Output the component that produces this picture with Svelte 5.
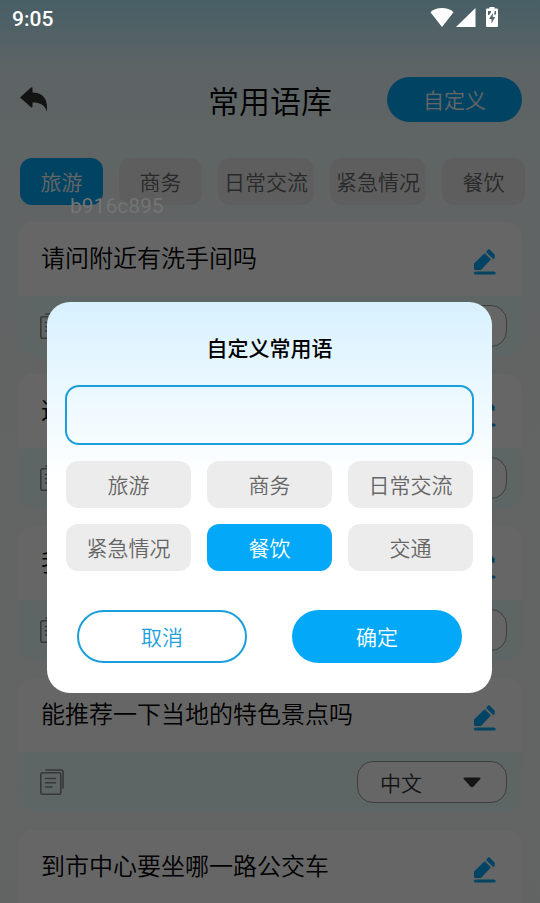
<script>
  const tabs = ['旅游', '商务', '日常交流', '紧急情况', '餐饮'];
  const categories = ['旅游', '商务', '日常交流', '紧急情况', '餐饮', '交通'];
  const phrases = [
    '请问附近有洗手间吗',
    '这个多少钱',
    '我想去这个地方',
    '能推荐一下当地的特色景点吗',
    '到市中心要坐哪一路公交车'
  ];
  let activeTab = $state('旅游');
  let category = $state('餐饮');
  let phrase = $state('');
</script>

<div class="screen">
  <div class="status">
    <span>9:05</span>
    <div class="signals">
      <svg width="24" height="20" viewBox="0 0 24 20" fill="#fff"><path d="M12 20 .5 5.200C3.500 2.400 7.500 1 12 1s8.500 1.400 11.500 4.200z" /></svg>
      <svg width="20" height="20" viewBox="0 0 20 20" fill="#fff"><path d="M19.500 1v19H0z" /></svg>
      <svg class="battery" width="12" height="20" viewBox="0 0 12 20"><path fill="#fff" d="M3.500 0h5v1.500H11q1 0 1 1V19q0 1-1 1H1q-1 0-1-1V2.500q0-1 1-1h2.500z" /><path fill="#56656b" d="M6.800 6 3 12h2.500v4.500L9.200 10H6.800zM2 4h3v1.200L3.200 8H2zM8.800 4H10v3.500H8z" /></svg>
    </div>
  </div>

  <header>
    <button class="back" aria-label="返回">
      <svg width="28" height="25" viewBox="0 0 28 25" fill="#303030"><path d="M0 10.500 11 .500q1.500-1 1.500.700v4.300C22 5.500 27 11 27 20v4.500C24.500 18 20.500 15.500 12.500 15.500v4q0 1.500-1.500.700z" /></svg>
    </button>
    <h1>常用语库</h1>
    <button class="custom">自定义</button>
  </header>

  <nav class="tabs">
    {#each tabs as tab}
      <button class:active={tab === activeTab} onclick={() => (activeTab = tab)}>{tab}</button>
    {/each}
  </nav>

  <main>
    {#each phrases as text, i}
      <article>
        <div class="top">
          <p>{text}</p>
          <button class="edit" aria-label="编辑">
            <svg width="22" height="26" viewBox="0 0 22 26" fill="#03a9f8"><path d="M0 14.500 10 4.700q.700-.600 1.300 0l5 5q.600.700 0 1.300L7 21H1Q0 21 0 20zM12 3 14.200.600q.700-.600 1.400 0l5 5q.600.700 0 1.400v2q-.500 1.500-1.900.500zM1.500 22.500h18.600a1.500 1.500 0 0 1 0 3H1.500a1.500 1.500 0 0 1 0-3z" /></svg>
          </button>
        </div>
        <div class="bottom">
          <button class="copy" aria-label="复制">
            <svg width="24" height="26" viewBox="0 0 24 26" fill="none" stroke="#8a8a8a" stroke-width="1.600" stroke-linecap="round"><rect x=".8" y="3.800" width="20" height="21.400" rx="2" /><path d="M6 1h15q2 0 2 2v16M5.500 9.500h10M5.500 13.800h10M5.500 18h6.500" /></svg>
          </button>
          <div class="language">
            <select aria-label="语言 {i + 1}"><option>中文</option></select>
            <svg width="18" height="11" viewBox="0 0 18 11" fill="#333"><path d="M2 .500h14q2.500 0 1 1.800L10.500 9.500Q9 11 7.500 9.500L1 2.300Q-.500.500 2 .500z" /></svg>
          </div>
        </div>
      </article>
    {/each}
  </main>
  <span class="device">b916c895</span>

  <div class="overlay">
    <div class="dialog" role="dialog" aria-modal="true" aria-labelledby="dialog-title">
      <h2 id="dialog-title">自定义常用语</h2>
      <input type="text" aria-labelledby="dialog-title" bind:value={phrase} />
      <div class="categories">
        {#each categories as name}
          <button class:active={name === category} onclick={() => (category = name)}>{name}</button>
        {/each}
      </div>
      <div class="actions">
        <button class="cancel">取消</button>
        <button class="confirm">确定</button>
      </div>
    </div>
  </div>
</div>

<style>
  :global(body) { margin: 0; }
  * { box-sizing: border-box; }
  .screen {
    position: relative;
    height: 100vh;
    overflow: hidden;
    background: linear-gradient(#b2eeff 0, #eafafc 70px, #f0f9f9 200px, #f8fafa 500px, #f6fafa 100%);
    font-family: "Noto Sans CJK SC", sans-serif;
    font-weight: 350;
    color: #000;
  }
  button, input, select { font: inherit; margin: 0; padding: 0; border: 0; }
  button { cursor: pointer; font-size: 21px; padding-bottom: 2px; }
  svg { display: block; }
  .status {
    position: relative;
    z-index: 2;
    display: flex;
    justify-content: space-between;
    height: 36px;
    padding: 7px 42px 0 12px;
    color: #fff;
    font: 500 21px/24px Roboto, sans-serif;
  }
  .signals { display: flex; gap: 2px; }
  .battery { margin-left: 8px; }
  header {
    display: grid;
    grid-template-columns: 135px 1fr 135px;
    align-items: center;
    height: 45px;
    margin: 41px 18px 0;
  }
  .back { justify-self: start; padding: 0 2px; background: none; }
  h1 { margin: 0; font-size: 31px; line-height: 45px; font-weight: 350; text-align: center; }
  .custom { height: 45px; border-radius: 23px; background: #03a9f8; color: #fff; }
  .tabs { display: flex; gap: 16px; margin: 36px 0 0 20px; }
  .tabs button {
    flex: none;
    min-width: 83px;
    height: 47px;
    padding: 0 6px 2px;
    border-radius: 12px;
    background: #ececec;
    color: #666;
  }
  .tabs .active, .categories .active { background: #03a9f8; color: #fff; }
  main { display: grid; gap: 18px; margin: 17px 18px 0; }
  article { border-radius: 16px; overflow: hidden; background: #fff; }
  .top { display: flex; justify-content: space-between; align-items: flex-start; height: 74px; padding: 17px 26px 0 23px; }
  p { margin: 0; font-size: 24px; line-height: 36px; }
  .edit, .copy { padding: 0; background: none; }
  .edit { margin-top: 10px; }
  .bottom { display: flex; justify-content: space-between; align-items: center; height: 60px; padding: 0 15px 0 22px; background: #ebfdfd; }
  .language {
    display: flex;
    align-items: center;
    width: 150px;
    height: 42px;
    padding: 0 25px 0 22px;
    border: 1px solid #999;
    border-radius: 16px;
    background: #fff;
  }
  select { flex: 1; appearance: none; background: none; color: #333; font-size: 21px; }
  .device {
    position: absolute;
    z-index: 1;
    top: 193px;
    left: 70px;
    color: #747474;
    font: 21px/26px Roboto, sans-serif;
  }
  .overlay {
    position: absolute;
    inset: 0;
    display: flex;
    align-items: center;
    padding: 92px 48px 0 47px;
    background: rgba(0, 0, 0, 0.6);
  }
  .dialog {
    flex: 1;
    padding: 27px 18px 30px;
    border-radius: 23px;
    background: linear-gradient(#d8f1ff 0, #fff 180px);
  }
  h2 { margin: 0 0 20px; font-size: 21px; line-height: 36px; font-weight: 500; text-align: center; }
  input {
    display: block;
    width: 100%;
    height: 60px;
    padding: 0 16px;
    border: 2px solid #1a9fdc;
    border-radius: 14px;
    background: none;
    font-size: 21px;
  }
  .categories { display: grid; grid-template-columns: repeat(3, 1fr); gap: 16px; margin: 16px 1px 0; }
  .categories button { height: 47px; border-radius: 12px; background: #ececec; color: #666; }
  .actions { display: grid; grid-template-columns: 1fr 1fr; gap: 45px; margin: 39px 12px 0; }
  .actions button { height: 53px; border-radius: 27px; }
  .actions .cancel { border: 2px solid #1a9fdc; background: #fff; color: #1a9fdc; }
  .actions .confirm { background: #03a9f8; color: #fff; }
</style>
